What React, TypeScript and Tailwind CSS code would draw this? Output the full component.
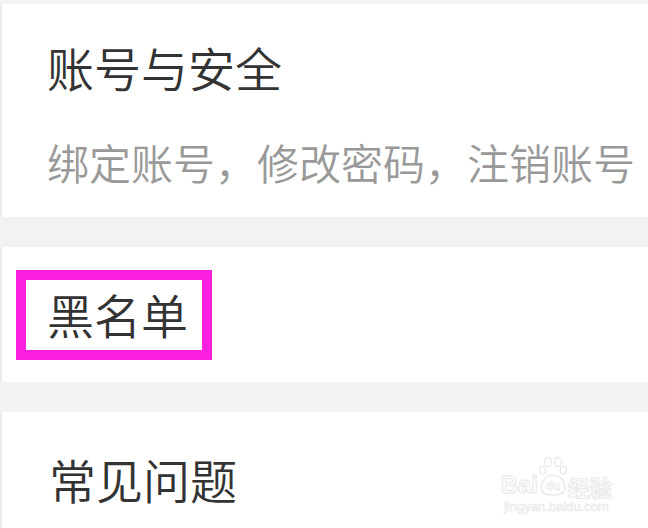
const cjk = { fontFamily: '"Noto Sans CJK SC", "Noto Sans", sans-serif' }

function BaiduMark() {
  return (
    <div className="flex flex-col items-center select-none" style={{ fontFamily: '"Liberation Sans", Arial, sans-serif' }}>
      <div className="flex items-end gap-[1px] leading-none text-white">
        <span className="text-[24px] font-bold [-webkit-text-stroke:1px_#e8e8e8]">Bai</span>
        <svg width="28" height="40" viewBox="0 0 28 40" fill="none" stroke="#e6e6e6" strokeWidth="1.2">
          <ellipse cx="9" cy="5" rx="3.5" ry="4.5" />
          <ellipse cx="19" cy="5" rx="3.5" ry="4.5" />
          <ellipse cx="3.5" cy="13" rx="3" ry="4" />
          <ellipse cx="24.5" cy="13" rx="3" ry="4" />
          <path d="M2 31c0-8 6-13 12-13s12 5 12 13c0 5-4 7-12 7S2 36 2 31z" />
          <text x="14" y="33" textAnchor="middle" fontSize="12" fontWeight="bold" fill="#ffffff" stroke="#e6e6e6" strokeWidth="0.6">du</text>
        </svg>
        <span className="text-[22px] font-bold [-webkit-text-stroke:1px_#e8e8e8]" style={cjk}>经验</span>
      </div>
      <span className="text-[13px] leading-none mt-[3px] text-white [-webkit-text-stroke:0.7px_#e8e8e8]">jingyan.baidu.com</span>
    </div>
  )
}

export default function App() {
  return (
    <div className="w-[648px] h-[528px] overflow-hidden bg-[#f2f2f1] flex flex-col" style={cjk}>
      <div className="mt-[4px] h-[213px] bg-white border-l-2 border-[#ececec] pl-[45px] pt-[39px] shrink-0">
        <div className="text-[47px] font-[350] leading-none text-[#333333]">账号与安全</div>
        <div className="mt-[51px] text-[42px] font-[350] leading-none text-[#999999]">绑定账号，修改密码，注销账号</div>
      </div>
      <div className="mt-[30px] h-[135px] bg-white border-l-2 border-[#ececec] pl-[14px] pt-[23px] shrink-0">
        <div className="inline-block border-[10px] border-[#fa1fde] pl-[21px] pr-[14px] pt-[10px] pb-[13px]">
          <span className="block text-[47px] font-[350] leading-none text-[#333333]">黑名单</span>
        </div>
      </div>
      <div className="mt-[30px] flex-1 bg-white border-l-2 border-[#ececec] pl-[47px] pr-[36px] flex items-start justify-between">
        <div className="mt-[43px] text-[47px] font-[350] leading-none text-[#333333]">常见问题</div>
        <div className="mt-[45px]">
          <BaiduMark />
        </div>
      </div>
    </div>
  )
}
